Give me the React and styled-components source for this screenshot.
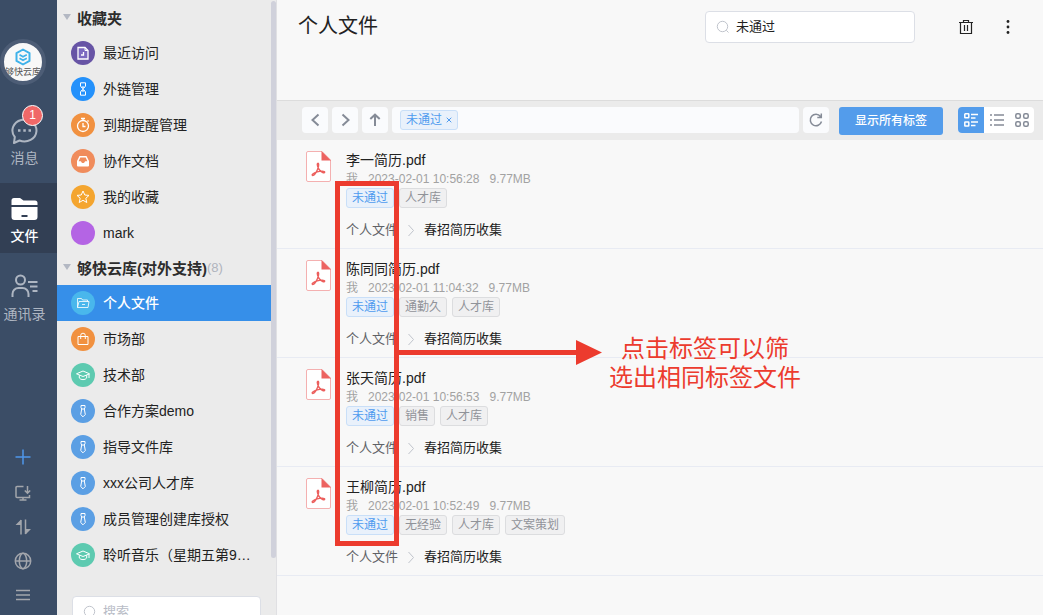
import React from 'react'
import styled, { createGlobalStyle } from 'styled-components'

const GlobalStyle = createGlobalStyle`
  * {
    box-sizing: border-box;
  }
  body {
    margin: 0;
    overflow: hidden;
    font-family: 'Liberation Sans', 'Noto Sans CJK SC', sans-serif;
    font-size: 14px;
    color: #222;
    background: #f8f8f8;
  }
  button, input {
    font-family: inherit;
    margin: 0;
  }
  button {
    border: none;
    padding: 0;
    background: none;
    cursor: pointer;
  }
  a {
    color: inherit;
    text-decoration: none;
  }
  ul {
    list-style: none;
    margin: 0;
    padding: 0;
  }
  svg {
    display: block;
    flex: none;
  }
`

const Layout = styled.div`
  display: flex;
  height: 100vh;
  overflow: hidden;
`

/* left rail */
const Rail = styled.nav`
  flex: none;
  width: 57px;
  display: flex;
  flex-direction: column;
  gap: 8px;
  background: #3b4d66;
`
const Avatar = styled.button`
  width: 46px;
  height: 46px;
  margin: 39px 0 12px;
  border: 4px solid #4d5d76;
  border-radius: 50%;
  background: #f8f8f8;
  overflow: hidden;
  display: flex;
  flex-direction: column;
  align-items: center;
  padding-top: 5px;
  span {
    font-size: 9px;
    line-height: 12px;
    white-space: nowrap;
    color: #555;
  }
`
const RailItem = styled.a`
  position: relative;
  height: 70px;
  padding: 13px 8px 0 0;
  display: flex;
  flex-direction: column;
  align-items: center;
  gap: 3px;
  font-size: 14px;
  line-height: 20px;
  white-space: nowrap;
  font-weight: ${({ $active }) => ($active ? 500 : 400)};
  color: ${({ $active }) => ($active ? '#fff' : '#aeb6c2')};
  background: ${({ $active }) => ($active ? '#323f54' : 'transparent')};
`
const Badge = styled.span`
  position: absolute;
  top: 0;
  left: 22px;
  width: 21px;
  height: 21px;
  border: 1px solid #fff;
  border-radius: 50%;
  background: #f06868;
  color: #fff;
  font-size: 12px;
  line-height: 19px;
  text-align: center;
`
const RailTools = styled.div`
  margin-top: auto;
  padding: 0 11px 3px 0;
  display: flex;
  flex-direction: column;
  align-items: center;
`
const RailTool = styled.button`
  width: 34px;
  height: 34px;
  margin-bottom: ${({ $primary }) => ($primary ? '2px' : 0)};
  display: flex;
  align-items: center;
  justify-content: center;
  color: ${({ $primary }) => ($primary ? '#4f96ea' : '#a3a6ac')};
`

/* library sidebar */
const Sidebar = styled.aside`
  flex: none;
  width: 220px;
  display: flex;
  flex-direction: column;
  background: #ebebeb;
  border-right: 1px solid #e0e0e3;
`
const Scroller = styled.div`
  flex: 1;
  min-height: 0;
  display: flex;
`
const Libraries = styled.div`
  flex: 1;
  min-width: 0;
  padding-top: 1px;
`
const GroupTitle = styled.h2`
  margin: 0;
  height: 34px;
  padding: 0 0 2px 6px;
  display: flex;
  align-items: center;
  font-size: 15px;
  font-weight: 600;
  color: #2d2d2d;
  svg {
    margin-right: 6px;
  }
  small {
    font-size: 13px;
    font-weight: 400;
    color: #b0b4bd;
  }
`
const Library = styled.a`
  height: 36px;
  padding: 0 18px 0 14px;
  display: flex;
  align-items: center;
  gap: 8px;
  font-weight: ${({ $active }) => ($active ? 500 : 400)};
  color: ${({ $active }) => ($active ? '#fff' : '#222')};
  background: ${({ $active }) => ($active ? '#368fe9' : 'transparent')};
  span:last-child {
    line-height: 20px;
    white-space: nowrap;
  }
`
const Dot = styled.span`
  flex: none;
  width: 24px;
  height: 24px;
  border-radius: 50%;
  display: flex;
  align-items: center;
  justify-content: center;
  color: #fff;
  background: ${({ $color }) => $color};
`
const Track = styled.div`
  width: 5px;
  padding: 1px 0 15px;
  display: flex;
`
const Thumb = styled.div`
  width: 5px;
  border-radius: 3px;
  background: #d0d1db;
`
const SidebarFooter = styled.div`
  height: 42px;
  flex: none;
  padding: 23px 15px 0;
`

const SearchBox = styled.label`
  width: ${({ $width }) => $width || 'auto'};
  height: 32px;
  padding: 0 10px;
  display: flex;
  align-items: center;
  gap: 6px;
  border: 1px solid #dcdfe6;
  border-radius: 4px;
  background: #fff;
  color: #c0c4cc;
  input {
    flex: 1;
    min-width: 0;
    padding: 0;
    border: none;
    outline: none;
    background: none;
    font-size: 13px;
    line-height: 20px;
    color: #222;
  }
  input::placeholder {
    color: #b8bcc6;
  }
`

/* content */
const Main = styled.main`
  flex: 1;
  min-width: 0;
  display: flex;
  flex-direction: column;
`
const Header = styled.header`
  height: 100px;
  padding: 11px 23px 0 21px;
  display: flex;
  align-items: flex-start;
  h1 {
    flex: 1;
    margin: 0;
    font-size: 20px;
    line-height: 30px;
    font-weight: 400;
  }
`
const HeaderActions = styled.div`
  height: 32px;
  margin-left: 39px;
  display: flex;
  align-items: center;
  gap: 18px;
`
const HeaderButton = styled.button`
  width: 24px;
  height: 24px;
  display: flex;
  align-items: center;
  justify-content: center;
  color: #222;
`
const Toolbar = styled.div`
  height: 40px;
  padding: 6px 9px 0 25px;
  display: flex;
  align-items: flex-start;
  gap: 4px;
  border-top: 1px solid #dcdcdc;
  background: #ebebeb;
`
const ToolButton = styled.button`
  flex: none;
  width: 26px;
  height: 26px;
  display: flex;
  align-items: center;
  justify-content: center;
  border-radius: 4px;
  background: #fafbfd;
  color: #858b97;
`
const FilterField = styled.div`
  flex: 1;
  height: 26px;
  padding: 3px 8px;
  border-radius: 4px;
  background: #fafbfd;
  display: flex;
`
const ShowTags = styled.button`
  width: 104px;
  height: 28px;
  margin: 0 11px 0 6px;
  padding-bottom: 3px;
  border-radius: 3px;
  background: #539ceb;
  color: #fff;
  font-size: 12px;
  font-weight: 500;
`
const ViewSwitch = styled.div`
  display: flex;
  border-radius: 4px;
  overflow: hidden;
  background: #fff;
`
const ViewButton = styled.button`
  width: ${({ $active }) => ($active ? '26px' : '25px')};
  height: 26px;
  display: flex;
  align-items: center;
  justify-content: center;
  color: ${({ $active }) => ($active ? '#fff' : '#858b97')};
  background: ${({ $active }) => ($active ? '#539ceb' : 'transparent')};
`

const Tag = styled.button`
  height: 20px;
  padding: 0 5px;
  display: flex;
  align-items: center;
  gap: 4px;
  border: 1px solid ${({ $blue }) => ($blue ? '#c9dff8' : '#dcdddf')};
  border-radius: 3px;
  background: ${({ $blue }) => ($blue ? '#e9f1fb' : '#f0f0f1')};
  color: ${({ $blue }) => ($blue ? '#4f9bef' : '#909399')};
  font-size: 12px;
  line-height: 18px;
`

const FileList = styled.ul`
  position: relative;
  flex: 1;
`
const FileRow = styled.li`
  padding: 10px 29px 8px;
  display: flex;
  gap: 15px;
  border-bottom: 1px solid #e8ebf3;
`
const FileIcon = styled.div`
  flex: none;
  padding-top: 1px;
`
const FileName = styled.div`
  font-size: 14px;
  line-height: 20px;
`
const FileMeta = styled.div`
  display: flex;
  gap: 10px;
  font-size: 12px;
  line-height: 18px;
  color: #a2a2a2;
`
const Tags = styled.div`
  display: flex;
  gap: 5px;
  margin-bottom: 12px;
`
const Path = styled.div`
  display: flex;
  align-items: center;
  gap: 9px;
  font-size: 13px;
  line-height: 20px;
  a:first-child {
    color: #606266;
  }
`

/* annotation drawn above the list */
const Highlight = styled.div`
  position: absolute;
  top: 41px;
  left: 58px;
  width: 64px;
  height: 365px;
  border: 5px solid #ec3b2e;
  pointer-events: none;
`
const Pointer = styled.div`
  position: absolute;
  top: 194px;
  left: 122px;
  display: flex;
  align-items: flex-start;
  gap: 7px;
  color: #ec3b2e;
  pointer-events: none;
  svg {
    margin-top: 6px;
  }
  p {
    margin: 0;
    font-size: 24px;
    line-height: 29px;
    text-align: center;
  }
`

const Icon = ({ size = 16, box = 16, width = 1, children }) => (
  <svg
    width={size}
    height={size}
    viewBox={`0 0 ${box} ${box}`}
    fill="none"
    stroke="currentColor"
    strokeWidth={width}
    aria-hidden="true"
  >
    {children}
  </svg>
)

const glyphs = {
  recent: (
    <>
      <path d="M3 2.500h7l3 3v8.500H3z" fill="#7c6ac0" strokeWidth="1.300" />
      <path d="M10 2.500v3h3" />
      <path d="M8.500 7v3H6" strokeWidth="1.300" />
    </>
  ),
  link: (
    <>
      <path d="M5.5 1.8h5V5L9 7H7L5.500 5z" />
      <path d="M7 9h2l1.500 2v3.200h-5V11z" />
      <path d="M8 5v6" />
    </>
  ),
  timer: (
    <>
      <circle cx="8" cy="9" r="5.500" strokeWidth="1.300" />
      <path d="M8 6v3.500h2.500M6 1.500h4M8 1.500v2M12.500 3.500l1 1" strokeWidth="1.300" />
    </>
  ),
  inbox: (
    <path
      d="M4.500 3h7L14 8v4.500a1 1 0 0 1-1 1H3a1 1 0 0 1-1-1V8zM5.300 4.400L3.600 8.300H6c.2 1.200 1 1.800 2 1.800s1.800-.6 2-1.800h2.400l-1.700-3.900z"
      fill="currentColor"
      fillRule="evenodd"
      stroke="none"
    />
  ),
  star: <path d="M8 2l1.800 4 4.200.4-3.200 2.900 1 4.200L8 11.300l-3.800 2.200 1-4.200L2 6.400 6.200 6z" strokeLinejoin="round" />,
  folder: (
    <>
      <path d="M2.500 12.500v-9h4l1 1.500h5v1.500M2.500 12.500l1.500-6h10l-1 6z" strokeLinejoin="round" opacity=".8" />
      <path d="M7 9.500h3" opacity=".8" />
    </>
  ),
  bag: (
    <>
      <path d="M3 5.500h10v8H3z" />
      <path d="M5.700 8V4.500a2.300 2.300 0 0 1 4.600 0V8" />
    </>
  ),
  cap: (
    <>
      <path d="M8 4l6.500 2.800L8 9.500 1.500 6.800z" strokeLinejoin="round" />
      <path d="M4.300 8.200V11c1 1.200 2.300 1.600 3.700 1.600s2.700-.4 3.700-1.600V8.200M14 7v4" />
    </>
  ),
  tie: (
    <>
      <path d="M6 2.500h4v2L9.300 6H6.700L6 4.500z" />
      <path d="M6.700 6l-1 5.500L8 13.800l2.300-2.300-1-5.500" />
    </>
  ),
}

const favorites = [
  { name: '最近访问', color: '#6754a5', icon: 'recent' },
  { name: '外链管理', color: '#2491fb', icon: 'link' },
  { name: '到期提醒管理', color: '#f19140', icon: 'timer' },
  { name: '协作文档', color: '#f08c5c', icon: 'inbox' },
  { name: '我的收藏', color: '#f4a52f', icon: 'star' },
  { name: 'mark', color: '#b464e4' },
]

const libraries = [
  { name: '个人文件', color: '#49b7ec', icon: 'folder', active: true },
  { name: '市场部', color: '#f19140', icon: 'bag' },
  { name: '技术部', color: '#5dcab0', icon: 'cap' },
  { name: '合作方案demo', color: '#5b9fe4', icon: 'tie' },
  { name: '指导文件库', color: '#5b9fe4', icon: 'tie' },
  { name: 'xxx公司人才库', color: '#5b9fe4', icon: 'tie' },
  { name: '成员管理创建库授权', color: '#5b9fe4', icon: 'tie' },
  { name: '聆听音乐（星期五第9…', color: '#5dcab0', icon: 'cap' },
]

const files = [
  { name: '李一简历.pdf', time: '2023-02-01 10:56:28', tags: ['人才库'] },
  { name: '陈同同简历.pdf', time: '2023-02-01 11:04:32', tags: ['通勤久', '人才库'] },
  { name: '张天简历.pdf', time: '2023-02-01 10:56:53', tags: ['销售', '人才库'] },
  { name: '王柳简历.pdf', time: '2023-02-01 10:52:49', tags: ['无经验', '人才库', '文案策划'] },
]

const Caret = () => (
  <svg width="8" height="6" viewBox="0 0 8 6" aria-hidden="true">
    <path d="M0 0h8L4 6z" fill="#b3b8c3" />
  </svg>
)

const SearchIcon = () => (
  <Icon size={14} box={14}>
    <circle cx="6.500" cy="6.500" r="5.200" />
    <path d="M10.300 10.300l2.200 2.200" />
  </Icon>
)

const PdfIcon = () => (
  <svg width="25" height="31" viewBox="0 0 25 31" fill="none" aria-hidden="true">
    <path d="M2 .5h14L24.500 9v20a1.500 1.500 0 0 1-1.500 1.500H2A1.500 1.500 0 0 1 .5 29V2A1.500 1.500 0 0 1 2 .5z" fill="#fff" stroke="#f4b0b0" />
    <path d="M15.500 0L25 9.500h-9.500z" fill="#ec6260" />
    <path
      d="M11.500 12.500c1.500-1 1.600 2.500 0 6-1.300 3-3.200 6-4.800 6-1.700-.5.500-2.500 4.500-3.600 3.600-1 7.500-1 7.500.2 0 1.500-3.500.2-5.200-2.100-1.600-2.200-2.700-5.700-2-6.500z"
      stroke="#ec5f5d"
      strokeWidth="1.400"
    />
  </svg>
)

const LibraryItem = ({ item }) => (
  <Library href="#" $active={item.active}>
    <Dot $color={item.color}>{item.icon && <Icon>{glyphs[item.icon]}</Icon>}</Dot>
    <span>{item.name}</span>
  </Library>
)

const LeftRail = () => (
  <Rail>
    <Avatar aria-label="够快云库">
      <svg width="18" height="18" viewBox="0 0 18 18" fill="none" stroke="#3fb2ea" strokeWidth="2" strokeLinejoin="round" aria-hidden="true">
        <path d="M9 1.500l6.500 3.600v7.800L9 16.500l-6.500-3.600V5.100z" />
        <path d="M5.500 6.800L9 8.800l3.800-2M5.500 10.300L9 12.300l3.800-2" strokeWidth="1.700" />
      </svg>
      <span>够快云库</span>
    </Avatar>
    <RailItem href="#">
      <Icon size={27} box={27} width={2}>
        <path d="M3 25l.8-6A12 11 0 1 1 8.500 22.500z" strokeLinejoin="round" />
        <path d="M7 12.500h2.500M12.300 12.500h2.500M17.500 12.500H20" strokeWidth="2.400" />
      </Icon>
      <Badge>1</Badge>
      消息
    </RailItem>
    <RailItem href="#" $active>
      <Icon size={27} box={27}>
        <path d="M.5 9V4.500a2.500 2.500 0 0 1 2.500-2.500h6l3.500 2.500H24a2.500 2.500 0 0 1 2.500 2.500V9z" fill="currentColor" stroke="none" />
        <path d="M.5 11h26v10a3 3 0 0 1-3 3h-20a3 3 0 0 1-3-3zM10.500 19v2h6v-2z" fill="currentColor" fillRule="evenodd" stroke="none" />
      </Icon>
      文件
    </RailItem>
    <RailItem href="#">
      <Icon size={27} box={27} width={2}>
        <circle cx="9.500" cy="6" r="4.500" />
        <path d="M1.500 23v-3a6 6 0 0 1 6-6h4a6 6 0 0 1 6 6v3M17 8h9.500M19 12.500h7.500M21.500 17h5" />
      </Icon>
      通讯录
    </RailItem>
    <RailTools>
      <RailTool $primary aria-label="新建">
        <Icon width={1.5}>
          <path d="M8 .5v15M.5 8h15" />
        </Icon>
      </RailTool>
      <RailTool aria-label="下载客户端">
        <Icon width={1.5}>
          <path d="M8.500 1.500H2A1 1 0 0 0 1 2.500v9a1 1 0 0 0 1 1h12.500V10M8 12.500v2.500M4.500 15h7M12.500 1v7M9.800 5.500l2.700 2.700 2.700-2.700" />
        </Icon>
      </RailTool>
      <RailTool aria-label="传输列表">
        <Icon width={1.5}>
          <path d="M6 1v14.500M10.500 .5V15" />
          <path d="M6 .5V6H.5zM10.500 15.500V10H16z" fill="currentColor" stroke="none" />
        </Icon>
      </RailTool>
      <RailTool aria-label="语言">
        <Icon size={18} box={18} width={1.5}>
          <circle cx="9" cy="9" r="7.700" />
          <ellipse cx="9" cy="9" rx="3.700" ry="7.700" />
          <path d="M1.300 9h15.400" />
        </Icon>
      </RailTool>
      <RailTool aria-label="菜单">
        <Icon size={14} box={14} width={1.5}>
          <path d="M0 2.500h14M0 7h14M0 11.500h14" />
        </Icon>
      </RailTool>
    </RailTools>
  </Rail>
)

const LibrarySidebar = () => (
  <Sidebar>
    <Scroller>
      <Libraries>
        <GroupTitle>
          <Caret />
          收藏夹
        </GroupTitle>
        {favorites.map((item) => (
          <LibraryItem key={item.name} item={item} />
        ))}
        <GroupTitle>
          <Caret />
          够快云库(对外支持)<small>(8)</small>
        </GroupTitle>
        {libraries.map((item) => (
          <LibraryItem key={item.name} item={item} />
        ))}
      </Libraries>
      <Track>
        <Thumb />
      </Track>
    </Scroller>
    <SidebarFooter>
      <SearchBox>
        <SearchIcon />
        <input type="text" placeholder="搜索" aria-label="搜索" />
      </SearchBox>
    </SidebarFooter>
  </Sidebar>
)

const FileItem = ({ file }) => (
  <FileRow>
    <FileIcon>
      <PdfIcon />
    </FileIcon>
    <div>
      <FileName>{file.name}</FileName>
      <FileMeta>
        <span>我</span>
        <span>{file.time}</span>
        <span>9.77MB</span>
      </FileMeta>
      <Tags>
        <Tag $blue>未通过</Tag>
        {file.tags.map((tag) => (
          <Tag key={tag}>{tag}</Tag>
        ))}
      </Tags>
      <Path>
        <a href="#">个人文件</a>
        <svg width="8" height="12" viewBox="0 0 8 12" fill="none" stroke="#c0c4cc" aria-hidden="true">
          <path d="M1.500 1l5 5.500-5 5.500" />
        </svg>
        <a href="#">春招简历收集</a>
      </Path>
    </div>
  </FileRow>
)

const App = () => {
  return (
    <>
      <GlobalStyle />
      <Layout>
        <LeftRail />
        <LibrarySidebar />
        <Main>
          <Header>
            <h1>个人文件</h1>
            <SearchBox $width="210px">
              <SearchIcon />
              <input type="text" defaultValue="未通过" aria-label="搜索文件" />
            </SearchBox>
            <HeaderActions>
              <HeaderButton aria-label="回收站">
                <Icon>
                  <path d="M1 3.500h14M5.500 3.500v-2h5v2M2.500 3.500v11h11v-11M6.500 6v6M9.500 6v6" strokeWidth="1.200" />
                </Icon>
              </HeaderButton>
              <HeaderButton aria-label="更多">
                <Icon>
                  <g fill="currentColor" stroke="none">
                    <circle cx="8" cy="2.500" r="1.400" />
                    <circle cx="8" cy="8" r="1.400" />
                    <circle cx="8" cy="13.500" r="1.400" />
                  </g>
                </Icon>
              </HeaderButton>
            </HeaderActions>
          </Header>
          <Toolbar>
            <ToolButton aria-label="后退">
              <Icon width={2}>
                <path d="M11.500 2.500L5.500 8l6 5.500" />
              </Icon>
            </ToolButton>
            <ToolButton aria-label="前进">
              <Icon width={2}>
                <path d="M5.500 2.500L11.500 8l-6 5.500" />
              </Icon>
            </ToolButton>
            <ToolButton aria-label="上一级">
              <Icon width={2}>
                <path d="M8 3v11M3.300 7L8 2.700 12.700 7" />
              </Icon>
            </ToolButton>
            <FilterField>
              <Tag $blue>
                未通过
                <Icon size={6} box={6}>
                  <path d="M.7 .7l4.600 4.600M5.300 .7L.7 5.300" />
                </Icon>
              </Tag>
            </FilterField>
            <ToolButton aria-label="刷新">
              <Icon width={1.5}>
                <path d="M13.500 9.500A5.700 5.700 0 1 1 12.500 4.500M13.300 1.500V5.500H9.300" />
              </Icon>
            </ToolButton>
            <ShowTags>显示所有标签</ShowTags>
            <ViewSwitch>
              <ViewButton $active aria-label="详情">
                <Icon size={14} box={14} width={1.5}>
                  <rect x=".8" y=".8" width="4" height="4" rx=".5" />
                  <rect x=".8" y="9" width="4" height="4" rx=".5" />
                  <path d="M7 1.500h7M7 5h4.500M7 9h7M7 12.500h4.500" />
                </Icon>
              </ViewButton>
              <ViewButton aria-label="列表">
                <Icon size={14} box={14} width={1.5}>
                  <path d="M0 2h2M4 2h10M0 7h2M4 7h10M0 12h2M4 12h10" />
                </Icon>
              </ViewButton>
              <ViewButton aria-label="缩略图">
                <Icon size={14} box={14} width={1.5}>
                  <rect x=".8" y=".8" width="4.500" height="4.500" rx="1.500" />
                  <rect x="8.700" y=".8" width="4.500" height="4.500" rx="1.500" />
                  <rect x=".8" y="8.700" width="4.500" height="4.500" rx="1.500" />
                  <rect x="8.700" y="8.700" width="4.500" height="4.500" rx="1.500" />
                </Icon>
              </ViewButton>
            </ViewSwitch>
          </Toolbar>
          <FileList>
            {files.map((file) => (
              <FileItem key={file.name} file={file} />
            ))}
            <Highlight as="li" aria-hidden="true" />
            <Pointer as="li">
              <svg width="203" height="25" viewBox="0 0 203 25" fill="currentColor" aria-hidden="true">
                <path d="M0 10h177V0l26 12.500L177 25V15H0z" />
              </svg>
              <p>
                点击标签可以筛
                <br />
                选出相同标签文件
              </p>
            </Pointer>
          </FileList>
        </Main>
      </Layout>
    </>
  )
}

export default App
